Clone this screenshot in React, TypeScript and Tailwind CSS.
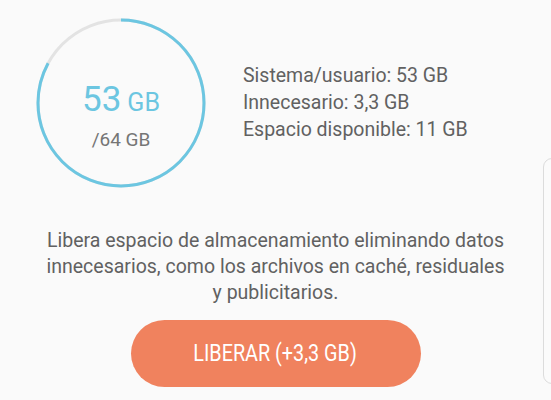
import React from "react";

function UsageRing() {
  const r = 83;
  const c = 2 * Math.PI * r;
  const used = 53 / 64;
  return (
    <div className="relative w-[170px] h-[170px] shrink-0">
      <svg width="170" height="170" viewBox="0 0 170 170" className="absolute inset-0">
        <circle cx="85" cy="85" r={r} fill="none" stroke="#e3e3e3" strokeWidth="3" />
        <circle
          cx="85"
          cy="85"
          r={r}
          fill="none"
          stroke="#6cc6e1"
          strokeWidth="3"
          strokeDasharray={`${c * used} ${c}`}
          transform="rotate(-90 85 85)"
        />
      </svg>
      <div className="relative flex h-full flex-col items-center justify-center pt-[24px]">
        <div className="flex items-baseline text-[#6cc6e1]">
          <span className="text-[35px] leading-none">53</span>
          <span className="ml-[6px] text-[25px] leading-none">GB</span>
        </div>
        <div className="mt-[13px] text-[19px] leading-none text-[#757575]">/64 GB</div>
      </div>
    </div>
  );
}

export default function App() {
  return (
    <div
      className="relative h-[400px] w-[551px] overflow-hidden bg-[#fafafa]"
      style={{ fontFamily: "Roboto, 'Noto Sans', sans-serif" }}
    >
      <div className="flex items-center pl-[36px] pt-[18px]">
        <UsageRing />
        <div className="ml-[37px] -mt-[2px] flex flex-col text-[19.5px] leading-[27px] text-[#616161]">
          <span>Sistema/usuario: 53 GB</span>
          <span>Innecesario: 3,3 GB</span>
          <span>Espacio disponible: 11 GB</span>
        </div>
      </div>

      <p className="mx-auto mt-[40px] w-[468px] text-center text-[19.5px] leading-[26px] text-[#616161]">
        Libera espacio de almacenamiento eliminando datos innecesarios, como los archivos en caché, residuales y publicitarios.
      </p>

      <div className="mt-[14px] flex justify-center">
        <button className="flex h-[67px] w-[290px] items-center justify-center rounded-full bg-[#f0825e] text-white">
          <span className="inline-block scale-x-[0.86] whitespace-nowrap text-[23px] leading-none">
            LIBERAR (+3,3 GB)
          </span>
        </button>
      </div>

      <div className="absolute left-[543px] top-[158px] h-[226px] w-[20px] rounded-l-[9px] border border-[#dcdcdc] bg-[#fbfbfb]" />
    </div>
  );
}
